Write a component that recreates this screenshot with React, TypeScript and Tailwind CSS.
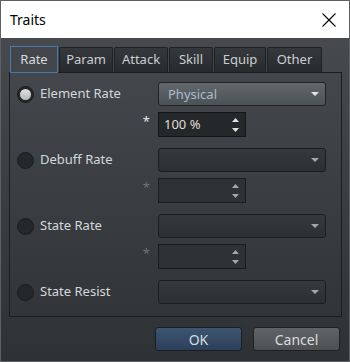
import React from 'react';

const font = { fontFamily: '"Noto Sans", "Open Sans", sans-serif' };

function Radio({ checked }: { checked?: boolean }) {
  return (
    <div className="w-[17px] h-[17px] rounded-full bg-[#25282b] border border-[#1a1c1e] flex items-center justify-center shrink-0">
      {checked && <div className="w-[11px] h-[11px] rounded-full bg-gradient-to-b from-[#e2e2e2] to-[#b8b8b8]" />}
    </div>
  );
}

function Combo({ value, enabled }: { value?: string; enabled?: boolean }) {
  return (
    <div
      className={
        'w-[168px] h-[24px] rounded-[3px] border flex items-center pl-[9px] pr-[6px] ' +
        (enabled
          ? 'bg-gradient-to-b from-[#63686c] to-[#4c5155] border-[#202326]'
          : 'bg-gradient-to-b from-[#35393c] to-[#2c3033] border-[#1b1e20]')
      }
    >
      <span className="flex-1 text-[13px] text-[#a9bccb] leading-none">{value}</span>
      <svg width="8" height="4" viewBox="0 0 8 4">
        <path d="M0 0H8L4 4Z" fill={enabled ? '#e4e4e4' : '#a4a7a9'} />
      </svg>
    </div>
  );
}

function Spin({ value, enabled }: { value?: string; enabled?: boolean }) {
  return (
    <div
      className={
        'w-[88px] h-[25px] border flex items-center pl-[5px] pr-[6px] ' +
        (enabled ? 'bg-[#25282b] border-[#131517]' : 'bg-[#2e3235] border-[#1a1c1e]')
      }
    >
      <span className="flex-1 text-[13px] text-[#e0dbd0] leading-none">{value}</span>
      <div className="flex flex-col gap-[6px]">
        <svg width="7" height="4" viewBox="0 0 7 4">
          <path d="M0 4H7L3.5 0Z" fill={enabled ? '#e0e0e0' : '#a4a7a9'} />
        </svg>
        <svg width="7" height="4" viewBox="0 0 7 4">
          <path d="M0 0H7L3.5 4Z" fill={enabled ? '#e0e0e0' : '#a4a7a9'} />
        </svg>
      </div>
    </div>
  );
}

function Group({ label, checked, value, spin, hasSpin }: { label: string; checked?: boolean; value?: string; spin?: string; hasSpin?: boolean }) {
  return (
    <div className="flex flex-col gap-[6px]">
      <div className="flex items-center">
        <div className="w-[148px] flex items-center pl-[7px] gap-[6px]">
          <Radio checked={checked} />
          <span className="text-[13px] text-[#d3d8dc]">{label}</span>
        </div>
        <Combo value={value} enabled={checked} />
      </div>
      {hasSpin && (
        <div className="flex items-center">
          <div className="w-[148px] flex justify-end pr-[8px] self-start pt-[1px]">
            <span className={'text-[13px] leading-[16px] ' + (checked ? 'text-[#e8e8e8]' : 'text-[#6d7479]')}>*</span>
          </div>
          <Spin value={spin} enabled={checked} />
        </div>
      )}
    </div>
  );
}

const tabs = [
  { name: 'Rate', w: 'w-[48px]' },
  { name: 'Param', w: 'w-[54px]' },
  { name: 'Attack', w: 'w-[54px]' },
  { name: 'Skill', w: 'w-[44px]' },
  { name: 'Equip', w: 'w-[52px]' },
  { name: 'Other', w: 'w-[55px]' },
];

export default function App() {
  return (
    <div className="w-[350px] h-[362px] border border-[#5e6062] flex flex-col" style={font}>
      {/* Title bar */}
      <div className="h-[37px] bg-white flex items-center justify-between pl-[9px] pr-[13px] shrink-0">
        <span className="text-[14px] text-black">Traits</span>
        <svg width="14" height="14" viewBox="0 0 14 14">
          <path d="M0.5 0.5L13.5 13.5M13.5 0.5L0.5 13.5" stroke="#000" strokeWidth="1.1" />
        </svg>
      </div>

      {/* Body */}
      <div className="flex-1 bg-gradient-to-b from-[#464a4e] to-[#2e3235] pt-[8px] pl-[8px] pr-[7px] flex flex-col">
        <div className="flex items-end gap-px h-[26px] pl-px">
          {tabs.map((t, i) =>
            i === 0 ? (
              <div
                key={t.name}
                className={t.w + ' h-[27px] -mb-px relative z-10 border border-[#4b79aa] bg-[#42464a] flex items-center justify-center text-[13px] text-[#d6dade]'}
              >
                {t.name}
              </div>
            ) : (
              <div
                key={t.name}
                className={t.w + ' h-[25px] border border-b-0 border-[#1e2124] rounded-t-[2px] bg-gradient-to-b from-[#35393c] to-[#282b2e] flex items-center justify-center text-[13px] text-[#c9ced2]'}
              >
                {t.name}
              </div>
            )
          )}
        </div>

        <div className="h-[245px] border border-[#1b1e20] pt-[9px] flex flex-col gap-[11px]">
          <Group label="Element Rate" checked value="Physical" spin="100 %" hasSpin />
          <Group label="Debuff Rate" hasSpin />
          <Group label="State Rate" hasSpin />
          <Group label="State Resist" />
        </div>

        <div className="flex justify-end gap-[11px] mt-[10px] pr-[2px]">
          <div className="w-[87px] h-[24px] rounded-[3px] border border-[#1a1e23] bg-gradient-to-b from-[#3d5572] to-[#2c4058] flex items-center justify-center text-[14px] text-[#d4dbe2]">
            OK
          </div>
          <div className="w-[87px] h-[24px] rounded-[3px] border border-[#1e2123] bg-gradient-to-b from-[#606467] to-[#4c5053] flex items-center justify-center text-[14px] text-[#d8dcdf]">
            Cancel
          </div>
        </div>
      </div>
    </div>
  );
}
